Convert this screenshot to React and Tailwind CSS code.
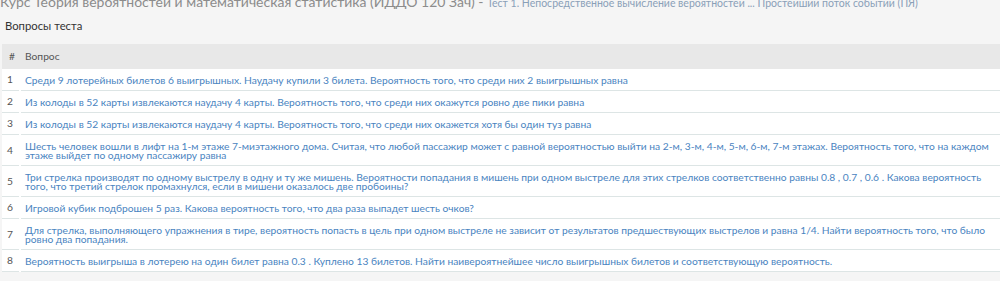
import React from "react";

const questions = [
  ["Среди 9 лотерейных билетов 6 выигрышных. Наудачу купили 3 билета. Вероятность того, что среди них 2 выигрышных равна"],
  ["Из колоды в 52 карты извлекаются наудачу 4 карты. Вероятность того, что среди них окажутся ровно две пики равна"],
  ["Из колоды в 52 карты извлекаются наудачу 4 карты. Вероятность того, что среди них окажется хотя бы один туз равна"],
  [
    "Шесть человек вошли в лифт на 1-м этаже 7-миэтажного дома. Считая, что любой пассажир может с равной вероятностью выйти на 2-м, 3-м, 4-м, 5-м, 6-м, 7-м этажах. Вероятность того, что на каждом",
    "этаже выйдет по одному пассажиру равна",
  ],
  [
    "Три стрелка производят по одному выстрелу в одну и ту же мишень. Вероятности попадания в мишень при одном выстреле для этих стрелков соответственно равны 0.8 , 0.7 , 0.6 . Какова вероятность",
    "того, что третий стрелок промахнулся, если в мишени оказалось две пробоины?",
  ],
  ["Игровой кубик подброшен 5 раз. Какова вероятность того, что два раза выпадет шесть очков?"],
  [
    "Для стрелка, выполняющего упражнения в тире, вероятность попасть в цель при одном выстреле не зависит от результатов предшествующих выстрелов и равна 1/4. Найти вероятность того, что было",
    "ровно два попадания.",
  ],
  ["Вероятность выигрыша в лотерею на один билет равна 0.3 . Куплено 13 билетов. Найти наивероятнейшее число выигрышных билетов и соответствующую вероятность."],
];

export default function App() {
  return (
    <div className="h-[281px] w-[1000px] overflow-hidden bg-[#f5f5f5] font-['Lato','Open_Sans',sans-serif]">
      <div className="-mt-[5px] flex h-[14px] items-baseline whitespace-nowrap leading-[14px]">
        <span className="text-[14px] text-[#8c8c8c]">
          Курс Теория вероятностей и математическая статистика (ИДДО 120 Зач) -&nbsp;
        </span>
        <span className="text-[10.5px] text-[#8aa0b8]">
          Тест 1. Непосредственное вычисление вероятностей ... Простейший поток событий (ПЯ)
        </span>
      </div>
      <div className="pl-[5px] pt-[10px] pb-[11px] text-[11.3px] leading-[14px] text-[#333]">
        Вопросы теста
      </div>
      <div className="ml-[2px]">
        <div className="grid h-[25px] grid-cols-[17px_1fr] items-center gap-x-[2px] bg-[#e8e8e8] text-[10.25px] text-[#555]">
          <div className="pl-[7px]">#</div>
          <div className="pl-[4px]">Вопрос</div>
        </div>
        {questions.map((lines, i) => (
          <div
            key={i}
            className="grid grid-cols-[17px_1fr] gap-x-[2px] bg-white text-[10.25px] leading-[9px]"
          >
            <div className="flex items-center border-b border-[#dde5e5] pl-[5px] text-[#555]">
              {i + 1}
            </div>
            <div className="border-b border-[#dde5e5] pt-[7px] pb-[5px] pl-[4px] text-[#4a84bf]">
              {lines.map((l, j) => (
                <div key={j}>{l}</div>
              ))}
            </div>
          </div>
        ))}
      </div>
    </div>
  );
}
